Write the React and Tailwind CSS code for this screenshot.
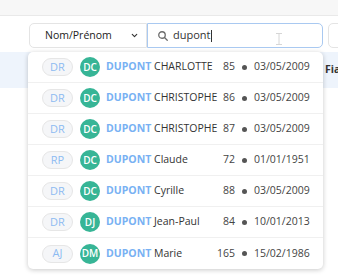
import React from 'react';

const rows = [
  { tag: 'DR', ini: 'DC', first: 'CHARLOTTE', num: '85', date: '03/05/2009' },
  { tag: 'DR', ini: 'DC', first: 'CHRISTOPHE', num: '86', date: '03/05/2009' },
  { tag: 'DR', ini: 'DC', first: 'CHRISTOPHE', num: '87', date: '03/05/2009' },
  { tag: 'RP', ini: 'DC', first: 'Claude', num: '72', date: '01/01/1951' },
  { tag: 'DR', ini: 'DC', first: 'Cyrille', num: '88', date: '03/05/2009' },
  { tag: 'DR', ini: 'DJ', first: 'Jean-Paul', num: '84', date: '10/01/2013' },
  { tag: 'AJ', ini: 'DM', first: 'Marie', num: '165', date: '15/02/1986' },
];

const App = () => {
  return (
    <div
      className="relative w-[338px] h-[280px] overflow-hidden bg-white text-[10.5px] text-[#333]"
      style={{ fontFamily: '"Open Sans", "Liberation Sans", sans-serif' }}
    >
      {/* Top band */}
      <div className="h-[16px] bg-[#f7f7f7] border-b border-[#e9e9e9]" />

      {/* Toolbar */}
      <div className="flex mt-[7px] h-[25px] pl-[29px]">
        <div className="shrink-0 w-[118px] flex items-center justify-between pl-[15px] pr-[7px] border border-[#e4e4e4] rounded-l-[5px] bg-white">
          <span className="text-[#222]">Nom/Prénom</span>
          <svg width="9" height="9" viewBox="0 0 24 24" fill="none" stroke="#333" strokeWidth="3" strokeLinecap="round" strokeLinejoin="round">
            <path d="M6 9l6 6 6-6" />
          </svg>
        </div>
        <div className="relative shrink-0 w-[176px] flex items-center gap-[4px] pl-[9px] border border-[#a9c9f1] rounded-r-[5px] bg-white">
          <svg width="12" height="12" viewBox="0 0 24 24" fill="none" stroke="#6b6b6b" strokeWidth="2.6" strokeLinecap="round">
            <circle cx="10" cy="10" r="6.5" />
            <path d="M15 15l5.5 5.5" />
          </svg>
          <span className="text-[#333] text-[11px]">dupont</span>
          <span className="w-px h-[12px] bg-[#333] -ml-[4px]" />
          {/* mouse I-beam */}
          <svg className="absolute left-[127px] top-[9px]" width="8" height="12" viewBox="0 0 8 12" fill="none" stroke="#d6d6d6" strokeWidth="1">
            <path d="M1 0.5h6M4 0.5v11M1 11.5h6" />
          </svg>
        </div>
        <div className="shrink-0 ml-[5px] w-[40px] border border-[#e4e4e4] rounded-[5px]" />
      </div>

      {/* Table header */}
      <div className="mt-[4px] h-[36px] bg-[#eef4fc] flex items-center pl-[325px] whitespace-nowrap font-bold text-[#333]">
        Fiabilité
      </div>

      {/* Dropdown */}
      <div className="absolute left-[28px] top-[52px] w-[295px] bg-white rounded-[5px] shadow-[0_1px_5px_rgba(0,0,0,0.22)]">
        {rows.map((r, i) => (
          <div
            key={i}
            className={`h-[31px] flex items-center pl-[14px] pr-[15px] ${i < rows.length - 1 ? 'border-b border-[#f0f0f0]' : ''}`}
          >
            <span className="shrink-0 w-[31px] h-[18px] flex items-center justify-center rounded-full bg-[#f5f6f8] border border-[#e6e6e6] text-[#8dbbf2] text-[11px]">
              {r.tag}
            </span>
            <span className="shrink-0 ml-[7px] w-[20px] h-[20px] flex items-center justify-center rounded-full bg-[#37b596] text-white text-[10px] font-semibold">
              {r.ini}
            </span>
            <span className="ml-[6px] flex-1 whitespace-nowrap">
              <span className="font-bold text-[#78b1f3]">DUPONT</span>{' '}
              <span className="text-[#333]">{r.first}</span>
            </span>
            <span className="text-[#444]">{r.num}</span>
            <span className="shrink-0 mx-[7px] w-[5px] h-[5px] rounded-full bg-[#555]" />
            <span className="shrink-0 w-[54px] text-right text-[#444] whitespace-nowrap">{r.date}</span>
          </div>
        ))}
      </div>
    </div>
  );
};

export default App;
